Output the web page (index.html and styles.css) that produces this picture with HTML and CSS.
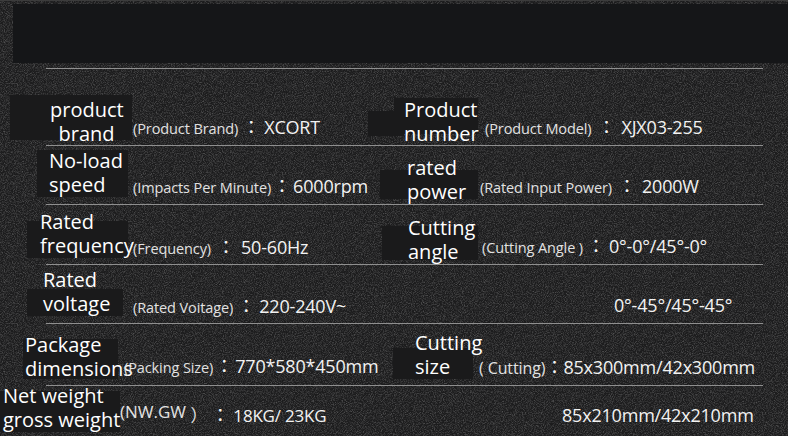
FILE: index.html
```html
<!DOCTYPE html>
<html lang="en">
<head>
<meta charset="utf-8">
<title>Specifications</title>
<link rel="stylesheet" href="styles.css">
</head>
<body>
<div class="sheet">
  <div class="band"></div>
  <div class="rule first"></div>

  <div class="row r1">
    <div class="cell">
      <div class="lbl l-brand">product<br>brand</div>
      <div class="desc d-brand"><span class="k">(Product Brand)</span><span class="c">：</span><span class="v">XCORT</span></div>
    </div>
    <div class="cell">
      <div class="lbl l-number">Product<br>number</div>
      <div class="desc d-number"><span class="k">(Product Model)</span><span class="c wide">：</span><span class="v">XJX03-255</span></div>
    </div>
  </div>
  <div class="rule"></div>

  <div class="row r2">
    <div class="cell">
      <div class="lbl l-speed">No-load<br>speed</div>
      <div class="desc d-speed"><span class="k">(Impacts Per Minute)</span><span class="c narrow">：</span><span class="v">6000rpm</span></div>
    </div>
    <div class="cell">
      <div class="lbl l-power">rated<br>power</div>
      <div class="desc d-power"><span class="k">(Rated Input Power)</span><span class="c wide">：</span><span class="v">2000W</span></div>
    </div>
  </div>
  <div class="rule"></div>

  <div class="row r3">
    <div class="cell">
      <div class="lbl l-freq">Rated<br>frequency</div>
      <div class="desc d-freq"><span class="k">(Frequency)</span><span class="c wide">：</span><span class="v">50-60Hz</span></div>
    </div>
    <div class="cell">
      <div class="lbl l-angle">Cutting<br>angle</div>
      <div class="desc d-angle"><span class="k">(Cutting Angle )</span><span class="c">：</span><span class="v">0°-0°/45°-0°</span></div>
    </div>
  </div>
  <div class="rule"></div>

  <div class="row r4">
    <div class="cell">
      <div class="lbl l-volt">Rated<br>voltage</div>
      <div class="desc d-volt"><span class="k">(Rated Voitage)</span><span class="c">：</span><span class="v">220-240V~</span></div>
    </div>
    <div class="cell">
      <div class="desc d-angle2"><span class="v">0°-45°/45°-45°</span></div>
    </div>
  </div>
  <div class="rule"></div>

  <div class="row r5">
    <div class="cell">
      <div class="lbl l-pack">Package<br>dimensions</div>
      <div class="desc d-pack"><span class="k">(Packing Size)</span><span class="c narrow">：</span><span class="v">770*580*450mm</span></div>
    </div>
    <div class="cell">
      <div class="lbl l-size">Cutting<br>size</div>
      <div class="desc d-size"><span class="k big">( Cutting)</span><span class="c tight">：</span><span class="v">85x300mm/42x300mm</span></div>
    </div>
  </div>
  <div class="rule"></div>

  <div class="row r6">
    <div class="cell">
      <div class="lbl l-weight">Net weight<br>gross weight</div>
      <div class="desc d-weight"><span class="k raised">(NW.GW </span><span class="k paren">）</span><span class="c">：</span><span class="v sm">18KG/ 23KG</span></div>
    </div>
    <div class="cell">
      <div class="desc d-size2"><span class="v">85x210mm/42x210mm</span></div>
    </div>
  </div>
</div>
</body>
</html>
```

FILE: styles.css
```css
html, body {
  margin: 0;
  padding: 0;
}

body {
  width: 788px;
  height: 436px;
  overflow: hidden;
  background-color: #1c1c1d;
  background-image: url("data:image/svg+xml,%3Csvg xmlns='http://www.w3.org/2000/svg' width='240' height='240'%3E%3Cfilter id='n' x='0' y='0'%3E%3CfeTurbulence type='fractalNoise' baseFrequency='1.1' numOctaves='2' stitchTiles='stitch'/%3E%3CfeColorMatrix values='0 0 0 0 1  0 0 0 0 1  0 0 0 0 1  0.5 0 0 0 -0.2'/%3E%3C/filter%3E%3Crect width='100%25' height='100%25' filter='url(%23n)'/%3E%3C/svg%3E");
  font-family: "Open Sans", "Noto Sans CJK TC", sans-serif;
}

.sheet {
  width: 788px;
  height: 436px;
  border-top: 1px solid #3c3c3c;
  box-sizing: border-box;
}

.band {
  height: 59px;
  margin: 3px 0 0 13px;
  background: #151618;
}

.rule {
  height: 1px;
  width: 717px;
  margin-left: 46px;
  background: #8f8f8f;
}

.rule.first {
  margin-top: 5px;
}

.row {
  display: grid;
  grid-template-columns: 394px 394px;
}

.r1 { height: 76px; }
.r2 { height: 58px; }
.r3 { height: 59px; }
.r4 { height: 58px; }
.r5 { height: 61px; }
.r6 { height: 50px; }

.cell {
  display: flex;
  align-items: flex-start;
  min-width: 0;
}

/* label blocks with dark backdrop */
.lbl {
  flex: none;
  box-sizing: border-box;
  font-size: 20px;
  line-height: 24px;
  color: #ffffff;
  white-space: nowrap;
  background-image: linear-gradient(#1a1a1b, #1a1a1b);
  background-repeat: no-repeat;
}

.l-brand {
  margin: 26px 0 0 10px;
  width: 122px;
  padding: 3px 9px 0 40px;
  text-align: center;
  background-size: 100% 45px;
  background-position: 0 0;
}

.l-number {
  margin: 29px 0 0 -26px;
  width: 110px;
  padding-left: 36px;
  background-image: linear-gradient(#1a1a1b, #1a1a1b), linear-gradient(#1a1a1b, #1a1a1b);
  background-size: 36px 25px, 84px 36px;
  background-position: 0 13px, 26px 0;
}

.l-speed {
  margin: 3px 0 0 37px;
  width: 91px;
  padding-left: 12px;
  background-size: 100% 50px;
  background-position: 0 1px;
}

.l-power {
  margin: 10px 0 0 -14px;
  width: 98px;
  padding-left: 27px;
  background-size: 100% 29px;
  background-position: 0 14px;
}

.l-freq {
  margin: 5px 0 0 27px;
  width: 101px;
  padding-left: 13px;
  background-size: 100% 40px;
  background-position: 0 11px;
}

.l-angle {
  margin: 11px 0 0 -12px;
  width: 96px;
  padding-left: 26px;
  background-size: 100% 34px;
  background-position: 0 10px;
}

.l-volt {
  margin: 3px 0 0 27px;
  width: 96px;
  padding-left: 16px;
  background-size: 100% 29px;
  background-position: 0 21px;
}

.l-pack {
  margin: 9px 0 0 23px;
  width: 95px;
  padding-left: 2px;
  background-size: 100% 40px;
  background-position: 0 6px;
}

.l-size {
  margin: 7px 0 0 -1px;
  width: 80px;
  padding-left: 22px;
  background-size: 100% 33px;
  background-position: 0 17px;
}

.l-weight {
  margin: -2px 0 0 0;
  width: 120px;
  padding-left: 3px;
  background-size: 100% 60px;
  background-position: 0 7px;
}

/* description + value */
.desc {
  flex: none;
  font-size: 18px;
  line-height: 24px;
  color: #f2f2f2;
  white-space: nowrap;
}

.v {
  letter-spacing: -0.2px;
}

.k {
  font-size: 14.5px;
  line-height: 1;
  color: #e2e2e2;
  letter-spacing: -0.1px;
}

.k.big {
  font-size: 16px;
}

.k.raised {
  font-size: 17px;
  vertical-align: 4px;
  letter-spacing: 0;
}

.k.paren {
  font-size: 17px;
}

.c {
  display: inline-block;
  width: 26px;
  text-align: center;
  font-family: "Noto Sans CJK TC", sans-serif;
  font-size: 18px;
  line-height: 18px;
  color: #f2f2f2;
}

.c.wide { width: 30px; }
.c.narrow { width: 22px; }
.c.tight { width: 18px; }

.v.sm {
  font-size: 17px;
}

.d-brand  { margin: 46px 0 0 1px; }
.d-number { margin: 46px 0 0 7px; }
.d-speed  { margin: 28px 0 0 5px; }
.d-power  { margin: 28px 0 0 2px; }
.d-freq   { margin: 30px 0 0 5px; }
.d-angle  { margin: 29px 0 0 4px; }
.d-volt   { margin: 29px 0 0 10px; }
.d-angle2 { margin: 28px 0 0 220px; }
.d-pack   { margin: 30px 0 0 6px; }
.d-size   { margin: 31px 0 0 6px; }
.d-weight { margin: 17px 0 0 0; }
.d-size2  { margin: 17px 0 0 168px; }
```
